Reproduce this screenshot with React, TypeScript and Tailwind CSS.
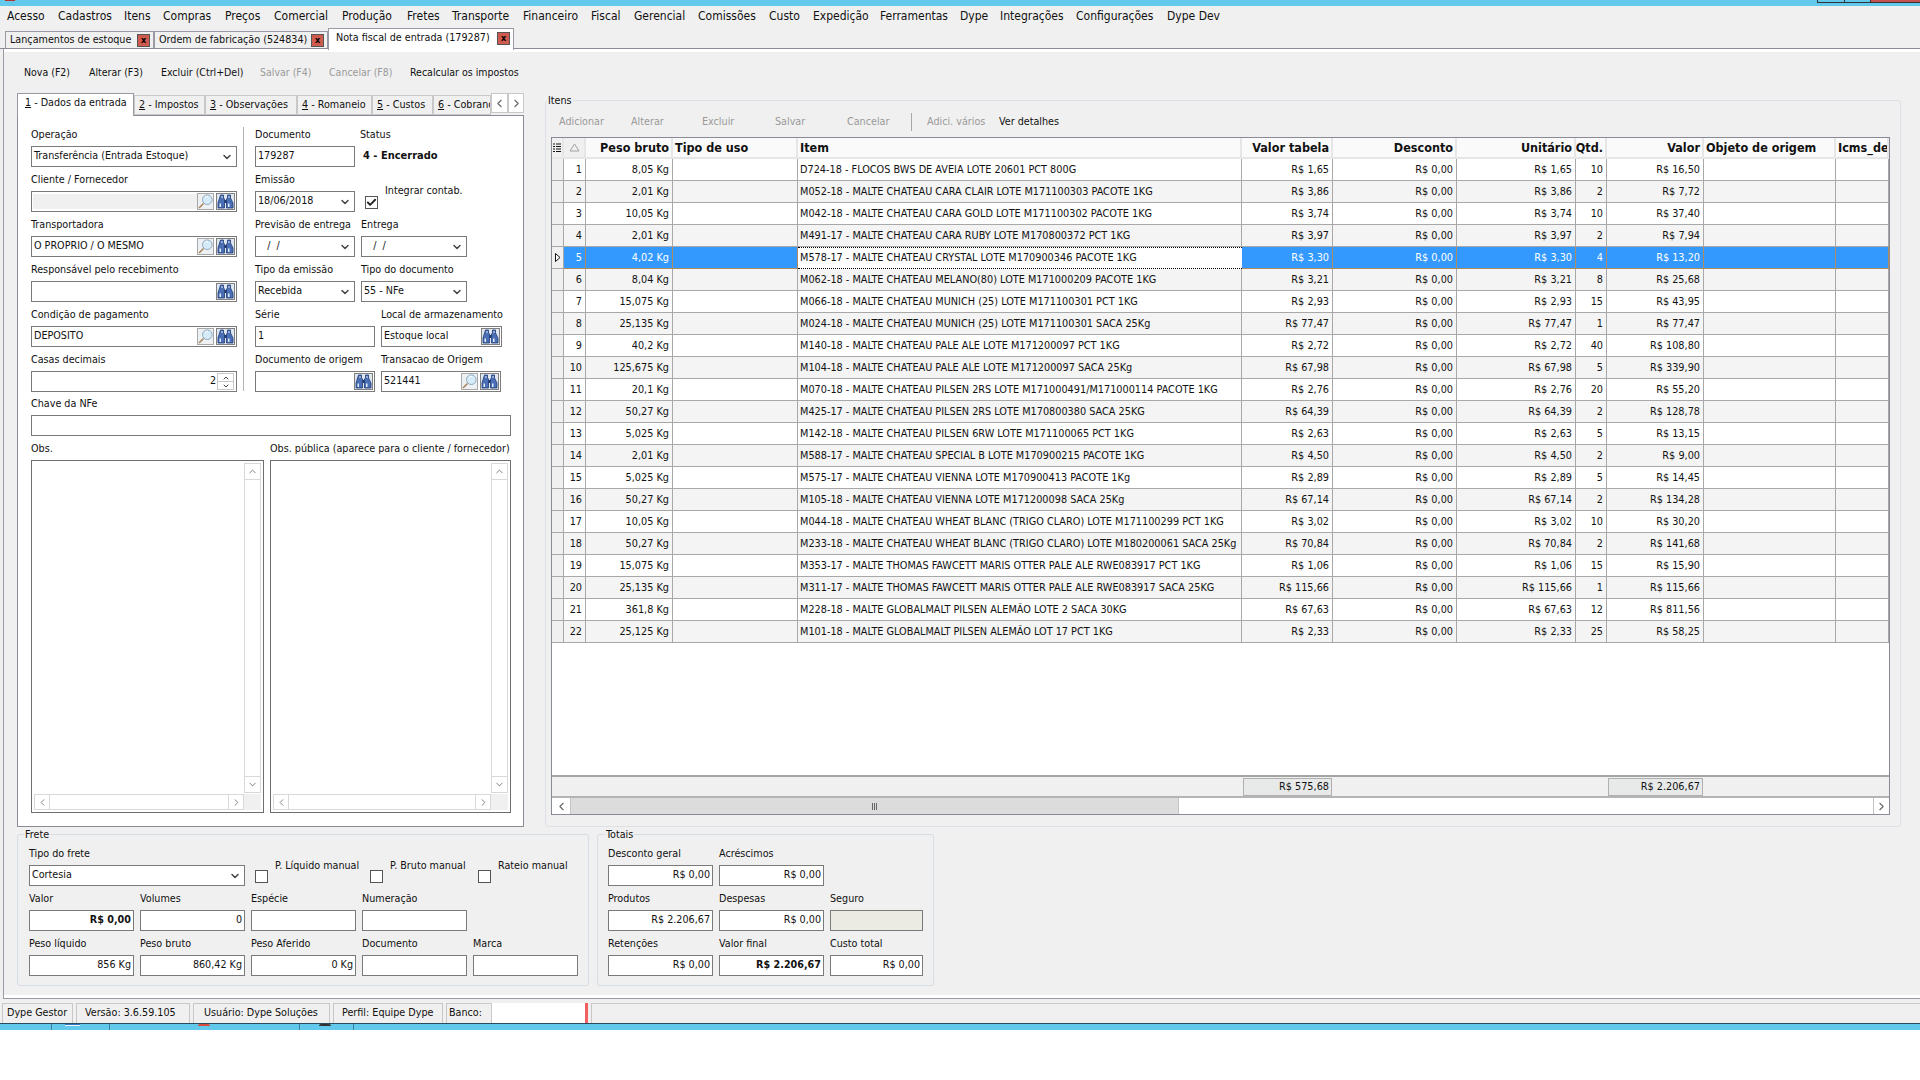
import React from 'react';
import { ChevronDown, ChevronLeft, ChevronRight, ChevronUp, Check } from 'lucide-react';

const menus = [
  ['Acesso', 'w-[51px]'], ['Cadastros', 'w-[66px]'], ['Itens', 'w-[39px]'], ['Compras', 'w-[62px]'],
  ['Preços', 'w-[49px]'], ['Comercial', 'w-[68px]'], ['Produção', 'w-[65px]'], ['Fretes', 'w-[45px]'],
  ['Transporte', 'w-[71px]'], ['Financeiro', 'w-[68px]'], ['Fiscal', 'w-[43px]'], ['Gerencial', 'w-[64px]'],
  ['Comissões', 'w-[71px]'], ['Custo', 'w-[44px]'], ['Expedição', 'w-[67px]'], ['Ferramentas', 'w-[80px]'],
  ['Dype', 'w-[40px]'], ['Integrações', 'w-[76px]'], ['Configurações', 'w-[91px]'], ['Dype Dev', 'w-[70px]'],
];

const rows = [
  ['8,05 Kg', 'D724-18 - FLOCOS BWS DE AVEIA LOTE 20601 PCT 800G', '1,65', '10', '16,50'],
  ['2,01 Kg', 'M052-18 - MALTE CHATEAU CARA CLAIR LOTE M171100303 PACOTE 1KG', '3,86', '2', '7,72'],
  ['10,05 Kg', 'M042-18 - MALTE CHATEAU CARA GOLD LOTE M171100302 PACOTE 1KG', '3,74', '10', '37,40'],
  ['2,01 Kg', 'M491-17 - MALTE CHATEAU CARA RUBY LOTE M170800372 PCT 1KG', '3,97', '2', '7,94'],
  ['4,02 Kg', 'M578-17 - MALTE CHATEAU CRYSTAL LOTE M170900346 PACOTE 1KG', '3,30', '4', '13,20'],
  ['8,04 Kg', 'M062-18 - MALTE CHATEAU MELANO(80) LOTE M171000209 PACOTE 1KG', '3,21', '8', '25,68'],
  ['15,075 Kg', 'M066-18 - MALTE CHATEAU MUNICH (25) LOTE M171100301 PCT 1KG', '2,93', '15', '43,95'],
  ['25,135 Kg', 'M024-18 - MALTE CHATEAU MUNICH (25) LOTE M171100301 SACA 25Kg', '77,47', '1', '77,47'],
  ['40,2 Kg', 'M140-18 - MALTE CHATEAU PALE ALE LOTE M171200097 PCT 1KG', '2,72', '40', '108,80'],
  ['125,675 Kg', 'M104-18 - MALTE CHATEAU PALE ALE LOTE M171200097 SACA 25Kg', '67,98', '5', '339,90'],
  ['20,1 Kg', 'M070-18 - MALTE CHATEAU PILSEN 2RS LOTE M171000491/M171000114 PACOTE 1KG', '2,76', '20', '55,20'],
  ['50,27 Kg', 'M425-17 - MALTE CHATEAU PILSEN 2RS LOTE M170800380 SACA 25KG', '64,39', '2', '128,78'],
  ['5,025 Kg', 'M142-18 - MALTE CHATEAU PILSEN 6RW LOTE M171100065 PCT 1KG', '2,63', '5', '13,15'],
  ['2,01 Kg', 'M588-17 - MALTE CHATEAU SPECIAL B LOTE M170900215 PACOTE 1KG', '4,50', '2', '9,00'],
  ['5,025 Kg', 'M575-17 - MALTE CHATEAU VIENNA LOTE M170900413 PACOTE 1Kg', '2,89', '5', '14,45'],
  ['50,27 Kg', 'M105-18 - MALTE CHATEAU VIENNA LOTE M171200098 SACA 25Kg', '67,14', '2', '134,28'],
  ['10,05 Kg', 'M044-18 - MALTE CHATEAU WHEAT BLANC (TRIGO CLARO) LOTE M171100299 PCT 1KG', '3,02', '10', '30,20'],
  ['50,27 Kg', 'M233-18 - MALTE CHATEAU WHEAT BLANC (TRIGO CLARO) LOTE M180200061 SACA 25Kg', '70,84', '2', '141,68'],
  ['15,075 Kg', 'M353-17 - MALTE THOMAS FAWCETT MARIS OTTER PALE ALE RWE083917 PCT 1KG', '1,06', '15', '15,90'],
  ['25,135 Kg', 'M311-17 - MALTE THOMAS FAWCETT MARIS OTTER PALE ALE RWE083917 SACA 25KG', '115,66', '1', '115,66'],
  ['361,8 Kg', 'M228-18 - MALTE GLOBALMALT PILSEN ALEMÃO LOTE 2 SACA 30KG', '67,63', '12', '811,56'],
  ['25,125 Kg', 'M101-18 - MALTE GLOBALMALT PILSEN ALEMÃO LOT 17 PCT 1KG', '2,33', '25', '58,25'],
];

const headers = [
  ['Peso bruto', 'justify-end'], ['Tipo de uso', 'justify-start'], ['Item', 'justify-start'],
  ['Valor tabela', 'justify-end'], ['Desconto', 'justify-end'], ['Unitário', 'justify-end'],
  ['Qtd.', 'justify-end'], ['Valor', 'justify-end'], ['Objeto de origem', 'justify-start'], ['Icms_de', 'justify-start'],
];

const gridCols = 'grid grid-cols-[12px_22px_87px_125px_444px_91px_124px_119px_31px_97px_132px_53px]';

const Magnifier = () => (
  <span className="w-[17px] h-[17px] bg-[#eef1f4] border border-[#a8a8a8] flex items-center justify-center shrink-0">
    <svg width="15" height="15" viewBox="0 0 15 15">
      <circle cx="9.300" cy="5.700" r="4.800" fill="#d5ebfa" stroke="#8fa9bd" />
      <path d="M7 3.500a3 3 0 0 1 3-1" stroke="#fff" fill="none" />
      <path d="M5.500 9.500 L1 14" stroke="#a8845f" strokeWidth="1.600" />
    </svg>
  </span>
);

const Binoculars = () => (
  <span className="w-[19px] h-[17px] bg-[#dfe7f0] border border-[#7f7f7f] flex items-center justify-center shrink-0">
    <svg width="17" height="15" viewBox="0 0 17 15">
      <path d="M3.500 1h3v3l1 1v9H1V9zM10.500 1h3L13.500 4 16 9v5H9.500V5l1-1z" fill="#4a6fb5" stroke="#1f3a73" strokeWidth=".8" />
      <path d="M7.500 6h2v3h-2z" fill="#1f3a73" />
      <path d="M2.500 9.500h1.500V13H2.500zM11 9.500h1.500V13H11zM4.500 2h1v2h-1zM11.500 2h1v2h-1z" fill="#dfeafa" />
    </svg>
  </span>
);

const Field = ({ label, w, children }: { label: string; w: string; children?: React.ReactNode }) => (
  <div className={`${w} h-[40px] shrink-0 flex flex-col`}>
    <div className="h-[19px] leading-[16px] whitespace-nowrap">{label}</div>
    {children}
  </div>
);

const Input = ({ value, right, bold, children }: { value?: string; right?: boolean; bold?: boolean; children?: React.ReactNode }) => (
  <div className={`h-[21px] border border-[#7a7a7a] bg-white flex items-center ${right ? 'justify-end pr-[2px]' : 'pl-[2px]'} ${bold ? 'font-bold' : ''}`}>
    {value !== undefined && <span className="whitespace-nowrap">{value}</span>}
    {children}
  </div>
);

const Select = ({ value }: { value: string }) => (
  <Input>
    <span className="flex-1 whitespace-pre">{value}</span>
    <ChevronDown size={12} strokeWidth={3} className="text-[#444] mr-[3px]" />
  </Input>
);

const Lookup = ({ value, mag = true, gray }: { value?: string; mag?: boolean; gray?: boolean }) => (
  <Input>
    <span className={`flex-1 flex items-center whitespace-nowrap ${gray ? 'bg-[#f0f0f0] h-[15px] -ml-[1px]' : ''}`}>{value}</span>
    {mag && <Magnifier />}
    <span className="w-[2px]" />
    <Binoculars />
    <span className="w-[1px]" />
  </Input>
);

const ScrollBox = () => (
  <div className="h-full border border-[#6e6e6e] bg-white flex flex-col p-[2px]">
    <div className="flex-1 flex justify-end min-h-0">
      <div className="w-[17px] flex flex-col text-[#777]">
        <div className="h-[17px] border border-[#d8d8d8] flex items-center justify-center"><ChevronUp size={11} /></div>
        <div className="flex-1 border-x border-[#d8d8d8]" />
        <div className="h-[17px] border border-[#d8d8d8] flex items-center justify-center"><ChevronDown size={11} /></div>
      </div>
    </div>
    <div className="h-[16px] flex text-[#777] mt-[1px]">
      <div className="flex-1 flex min-w-0">
        <div className="w-[16px] border border-[#d8d8d8] flex items-center justify-center"><ChevronLeft size={11} /></div>
        <div className="flex-1 border-y border-[#d8d8d8]" />
        <div className="w-[16px] border border-[#d8d8d8] flex items-center justify-center"><ChevronRight size={11} /></div>
      </div>
      <div className="w-[17px] bg-[#f0f0f0]" />
    </div>
  </div>
);

const Check13 = ({ checked }: { checked?: boolean }) => (
  <span className="w-[13px] h-[13px] border border-[#555] bg-white flex items-center justify-center shrink-0">
    {checked && <Check size={11} strokeWidth={4} className="text-[#222]" />}
  </span>
);

const DocTab = ({ label, active, w }: { label: string; active?: boolean; w: string }) => (
  <div className={`${w} flex items-center justify-between shrink-0 border border-[#9a9aa5] border-b-0 pr-[3px] ${active ? 'bg-white h-[22px] pl-[7px] pb-[3px] z-10' : 'bg-[#f0f0f0] h-[17px] mt-[3px] pl-[4px]'}`}>
    <span className="whitespace-nowrap">{label}</span>
    <span className="w-[13px] h-[13px] bg-[#cf5a4e] border border-[#555] flex items-center justify-center text-[9px] leading-none font-bold text-black">x</span>
  </div>
);

const FormTab = ({ n, label, w }: { n: string; label: string; w: string }) => (
  <div className={`${w} h-[20px] mt-[2px] pt-[1px] border border-[#c8c8c8] bg-[#f0f0f0] pl-[4px] flex items-center shrink-0 whitespace-pre overflow-hidden`}>
    <span className="underline">{n}</span> - {label}
  </div>
);

const ListIcon = () => (
  <svg width="8" height="10" viewBox="0 0 8 10">
    <path d="M0 1h2M0 3.500h2M0 6h2M0 8.500h2M3 1h5M3 3.500h5M3 6h5M3 8.500h5" stroke="#111" strokeWidth="1.200" />
  </svg>
);

const Triangle = () => (
  <svg width="11" height="9" viewBox="0 0 11 9">
    <path d="M5.500 1 L10 8 H1 Z" fill="none" stroke="#a0a0a0" />
  </svg>
);

export default function App() {
  return (
    <div className="w-[1920px] h-[1080px] bg-white text-[10.7px] text-[#111] overflow-hidden font-['DejaVu_Sans_Condensed','Liberation_Sans',sans-serif]">
      {/* barra de titulo */}
      <div className="h-[6px] bg-[#63c9ec] flex justify-between">
        <div className="ml-[5px] w-[10px] h-[1px] bg-[#b8322a]" />
        <div className="flex items-start h-[3px]">
          <div className="w-[28px] h-[3px] border-x border-b border-[#333]" />
          <div className="w-[26px] h-[3px] border-r border-b border-[#333]" />
          <div className="w-[49px] h-[3px] bg-[#c75050] border-b border-[#333]" />
        </div>
      </div>

      <div className="h-[1017px] bg-[#f0f0f0] flex flex-col">
        {/* menu */}
        <div className="h-[22px] pl-[7px] pb-[2px] flex items-center shrink-0 text-[12px]">
          {menus.map(([m, w]) => (
            <span key={m} className={`${w} shrink-0 whitespace-nowrap`}>{m}</span>
          ))}
        </div>

        {/* abas de documento */}
        <div className="h-[21px] pl-[5px] flex items-start shrink-0 border-b border-[#8c8c96]">
          <DocTab label="Lançamentos de estoque" w="w-[149px]" />
          <DocTab label="Ordem de fabricação (524834)" w="w-[174px]" />
          <DocTab label="Nota fiscal de entrada (179287)" active w="w-[186px]" />
        </div>

        <div className="flex-1 flex flex-col ml-[3px] border-l border-b border-[#9a9aa5] min-h-0">
          <div className="flex-1 flex flex-col border-y-[3px] border-white pl-[3px] min-h-0">
            {/* barra de ferramentas */}
            <div className="h-[41px] flex items-center pt-[1px] shrink-0 text-[10.5px]">
              <span className="ml-[17px] w-[65px]">Nova (F2)</span>
              <span className="w-[72px]">Alterar (F3)</span>
              <span className="w-[99px]">Excluir (Ctrl+Del)</span>
              <span className="w-[69px] text-[#9a9a9a]">Salvar (F4)</span>
              <span className="w-[81px] text-[#9a9a9a]">Cancelar (F8)</span>
              <span>Recalcular os impostos</span>
            </div>

            <div className="flex h-[734px] shrink-0 ml-[10px] gap-[21px]">
              {/* dados da entrada */}
              <div className="w-[507px] shrink-0 flex flex-col">
                <div className="h-[22px] flex items-start shrink-0">
                  <div className="w-[117px] h-[23px] bg-white border border-[#9a9aa5] border-b-0 pl-[7px] pb-[3px] flex items-center z-10 whitespace-pre">
                    <span className="underline">1</span> - Dados da entrada
                  </div>
                  <FormTab n="2" label="Impostos" w="w-[71px]" />
                  <FormTab n="3" label="Observações" w="w-[92px]" />
                  <FormTab n="4" label="Romaneio" w="w-[75px]" />
                  <FormTab n="5" label="Custos" w="w-[61px]" />
                  <FormTab n="6" label="Cobrança" w="w-[58px]" />
                  <div className="w-[17px] h-[20px] bg-white border border-[#c8c8c8] flex items-center justify-center text-[#666] shrink-0"><ChevronLeft size={13} /></div>
                  <div className="w-[16px] h-[20px] bg-white border border-[#c8c8c8] flex items-center justify-center text-[#666] shrink-0"><ChevronRight size={13} /></div>
                </div>
                <div className="flex-1 bg-white border border-[#8c8c96] pt-[11px] pl-[13px] pr-[12px] flex flex-col min-h-0">
                  <div className="flex h-[264px] shrink-0">
                    <div className="w-[206px] flex flex-col gap-[5px] shrink-0">
                      <Field label="Operação" w="w-full"><Select value="Transferência (Entrada Estoque)" /></Field>
                      <Field label="Cliente / Fornecedor" w="w-full"><Lookup gray /></Field>
                      <Field label="Transportadora" w="w-full"><Lookup value="O PROPRIO / O MESMO" /></Field>
                      <Field label="Responsável pelo recebimento" w="w-full"><Lookup mag={false} /></Field>
                      <Field label="Condição de pagamento" w="w-full"><Lookup value="DEPOSITO" /></Field>
                      <Field label="Casas decimais" w="w-full">
                        <Input right>
                          <span>2</span>
                          <span className="ml-[1px] w-[17px] h-[17px] flex flex-col text-[#444]">
                            <span className="h-[9px] border border-[#c8c8c8] flex items-center justify-center"><ChevronUp size={8} strokeWidth={3} /></span>
                            <span className="h-[8px] border border-[#c8c8c8] border-t-0 flex items-center justify-center"><ChevronDown size={8} strokeWidth={3} /></span>
                          </span>
                        </Input>
                      </Field>
                    </div>
                    <div className="ml-[6px] h-[264px] w-[1px] bg-[#b4b4b4] shrink-0" />
                    <div className="ml-[11px] flex-1 flex flex-col gap-[5px]">
                      <div className="flex gap-[5px]">
                        <Field label="Documento" w="w-[100px]"><Input value="179287" /></Field>
                        <div className="flex flex-col">
                          <div className="h-[19px] leading-[16px]">Status</div>
                          <div className="h-[21px] flex items-center pl-[3px] font-bold text-[11px]">4 - Encerrado</div>
                        </div>
                      </div>
                      <div className="flex h-[40px]">
                        <Field label="Emissão" w="w-[100px]"><Select value="18/06/2018" /></Field>
                        <div className="ml-[10px] mt-[24px]"><Check13 checked /></div>
                        <div className="ml-[7px] mt-[11px] whitespace-nowrap">Integrar contab.</div>
                      </div>
                      <div className="flex gap-[6px]">
                        <Field label="Previsão de entrega" w="w-[100px]"><Select value="   /  /" /></Field>
                        <Field label="Entrega" w="w-[106px]"><Select value="   /  /" /></Field>
                      </div>
                      <div className="flex gap-[6px]">
                        <Field label="Tipo da emissão" w="w-[100px]"><Select value="Recebida" /></Field>
                        <Field label="Tipo do documento" w="w-[106px]"><Select value="55 - NFe" /></Field>
                      </div>
                      <div className="flex gap-[6px]">
                        <Field label="Série" w="w-[120px]"><Input value="1" /></Field>
                        <Field label="Local de armazenamento" w="w-[121px]"><Lookup mag={false} value="Estoque local" /></Field>
                      </div>
                      <div className="flex gap-[6px]">
                        <Field label="Documento de origem" w="w-[120px]"><Lookup mag={false} /></Field>
                        <Field label="Transacao de Origem" w="w-[120px]"><Lookup value="521441" /></Field>
                      </div>
                    </div>
                  </div>
                  <div className="mt-[5px] h-[40px] shrink-0">
                    <Field label="Chave da NFe" w="w-[480px]"><Input /></Field>
                  </div>
                  <div className="mt-[5px] flex gap-[6px] h-[372px] shrink-0">
                    <div className="w-[233px] flex flex-col">
                      <div className="h-[19px] leading-[16px]">Obs.</div>
                      <div className="flex-1 min-h-0"><ScrollBox /></div>
                    </div>
                    <div className="w-[241px] flex flex-col">
                      <div className="h-[19px] leading-[16px] whitespace-nowrap">Obs. pública (aparece para o cliente / fornecedor)</div>
                      <div className="flex-1 min-h-0"><ScrollBox /></div>
                    </div>
                  </div>
                </div>
              </div>

              {/* grupo itens */}
              <div className="w-[1356px] shrink-0 mt-[7px] border border-[#dbe1e6] rounded-[3px] pl-[5px] pt-[10px] relative">
                <span className="absolute -top-[7px] left-[1px] bg-[#f0f0f0] px-[1px] leading-[13px]">Itens</span>
                <div className="h-[22px] mb-[4px] flex items-center pl-[8px] text-[#9a9a9a]">
                  <span className="w-[72px]">Adicionar</span>
                  <span className="w-[71px]">Alterar</span>
                  <span className="w-[73px]">Excluir</span>
                  <span className="w-[72px]">Salvar</span>
                  <span className="w-[64px]">Cancelar</span>
                  <span className="w-[1px] h-[18px] bg-[#a8a8a8] mr-[15px]" />
                  <span className="w-[72px]">Adici. vários</span>
                  <span className="text-[#111]">Ver detalhes</span>
                </div>

                <div className="w-[1339px] h-[678px] border border-[#8a8a94] bg-white flex flex-col overflow-hidden text-[10.8px]">
                  {/* cabecalho */}
                  <div className={`${gridCols} h-[21px] shrink-0 bg-[#fafafa] border-b-2 border-[#e6e6e6] font-bold text-[12.5px]`}>
                    <div className="flex items-center justify-center bg-[#f0f0f0] border-r-2 border-[#e6e6e6]"><ListIcon /></div>
                    <div className="flex items-center justify-center bg-[#f0f0f0] border-r-2 border-[#e6e6e6]"><Triangle /></div>
                    {headers.map(([h, align]) => (
                      <div key={h} className={`flex items-center ${align} px-[2px] pt-[1px] border-r-2 border-[#e6e6e6] whitespace-nowrap overflow-hidden`}>{h}</div>
                    ))}
                  </div>

                  {/* linhas */}
                  {rows.map((r, i) => {
                    const sel = i === 4;
                    const zebra = i % 2 === 1 ? 'bg-[#f4f4f4]' : 'bg-white';
                    const cell = `flex items-center pt-[1px] border-r border-b whitespace-nowrap overflow-hidden ${sel ? 'border-[#b08a60] bg-[#3399ff] text-white' : `border-[#a8a8a8] ${zebra}`}`;
                    return (
                      <div key={r[1]} className={`${gridCols} h-[22px] shrink-0`}>
                        <div className="bg-[#f0f0f0] border-r border-b border-[#a8a8a8] flex items-center justify-center">
                          {sel && <svg width="6" height="9" viewBox="0 0 6 9"><path d="M.5 .5 L5 4.500 L.5 8.500 Z" fill="#fff" stroke="#111" /></svg>}
                        </div>
                        <div className={`${cell} justify-end pr-[3px]`}>{i + 1}</div>
                        <div className={`${cell} justify-end pr-[3px]`}>{r[0]}</div>
                        <div className={cell} />
                        <div className={`flex items-center pl-[2px] pt-[1px] whitespace-nowrap overflow-hidden ${sel ? 'bg-white border-y border-dotted border-black' : `border-r border-b border-[#a8a8a8] ${zebra}`}`}>{r[1]}</div>
                        <div className={`${cell} justify-end pr-[3px]`}>R$ {r[2]}</div>
                        <div className={`${cell} justify-end pr-[3px]`}>R$ 0,00</div>
                        <div className={`${cell} justify-end pr-[3px]`}>R$ {r[2]}</div>
                        <div className={`${cell} justify-end pr-[3px]`}>{r[3]}</div>
                        <div className={`${cell} justify-end pr-[3px]`}>R$ {r[4]}</div>
                        <div className={cell} />
                        <div className={cell} />
                      </div>
                    );
                  })}
                  <div className="flex-1 min-h-0" />

                  {/* rodape */}
                  <div className={`${gridCols} h-[23px] shrink-0 bg-[#f0f0f0] border-y-2 border-[#a4a4a4] border-b-[#b4b4b4]`}>
                    <div className="col-span-5" />
                    <div className="my-[1px] mx-[1px] bg-[#e8eaea] border border-[#b0b0b0] flex items-center justify-end pr-[2px]">R$ 575,68</div>
                    <div className="col-span-3" />
                    <div className="my-[1px] mx-[1px] bg-[#e8eaea] border border-[#b0b0b0] flex items-center justify-end pr-[2px]">R$ 2.206,67</div>
                    <div className="col-span-2" />
                  </div>

                  {/* rolagem */}
                  <div className="h-[16px] shrink-0 flex text-[#666]">
                    <div className="w-[18px] flex items-center justify-center shrink-0"><ChevronLeft size={13} /></div>
                    <div className="w-[609px] bg-[#dcdcdc] border-x border-[#c4c4c4] flex items-center justify-center gap-[1px] shrink-0">
                      <span className="w-[1px] h-[7px] bg-[#666]" />
                      <span className="w-[1px] h-[7px] bg-[#666]" />
                      <span className="w-[1px] h-[7px] bg-[#666]" />
                    </div>
                    <div className="flex-1" />
                    <div className="w-[16px] border-l border-[#c4c4c4] flex items-center justify-center shrink-0"><ChevronRight size={13} /></div>
                  </div>
                </div>
              </div>
            </div>

            {/* frete e totais */}
            <div className="flex mt-[7px] ml-[10px] gap-[8px] items-start">
              <div className="w-[572px] h-[152px] border border-[#d6dde4] rounded-[3px] pl-[11px] pt-[11px] relative shrink-0 flex flex-col gap-[5px]">
                <span className="absolute -top-[7px] left-[6px] bg-[#f0f0f0] px-[1px] leading-[13px]">Frete</span>
                <div className="flex h-[40px]">
                  <Field label="Tipo do frete" w="w-[216px]"><Select value="Cortesia" /></Field>
                  <div className="ml-[10px] mt-[24px]"><Check13 /></div>
                  <div className="ml-[7px] mt-[12px] w-[95px] whitespace-nowrap">P. Líquido manual</div>
                  <div className="mt-[24px]"><Check13 /></div>
                  <div className="ml-[7px] mt-[12px] w-[88px] whitespace-nowrap">P. Bruto manual</div>
                  <div className="mt-[24px]"><Check13 /></div>
                  <div className="ml-[7px] mt-[12px] whitespace-nowrap">Rateio manual</div>
                </div>
                <div className="flex gap-[6px]">
                  <Field label="Valor" w="w-[105px]"><Input value="R$ 0,00" right bold /></Field>
                  <Field label="Volumes" w="w-[105px]"><Input value="0" right /></Field>
                  <Field label="Espécie" w="w-[105px]"><Input /></Field>
                  <Field label="Numeração" w="w-[105px]"><Input /></Field>
                </div>
                <div className="flex gap-[6px]">
                  <Field label="Peso líquido" w="w-[105px]"><Input value="856 Kg" right /></Field>
                  <Field label="Peso bruto" w="w-[105px]"><Input value="860,42 Kg" right /></Field>
                  <Field label="Peso Aferido" w="w-[105px]"><Input value="0 Kg" right /></Field>
                  <Field label="Documento" w="w-[105px]"><Input /></Field>
                  <Field label="Marca" w="w-[105px]"><Input /></Field>
                </div>
              </div>
              <div className="w-[337px] h-[152px] border border-[#d6dde4] rounded-[3px] pl-[10px] pt-[11px] relative shrink-0 flex flex-col gap-[5px]">
                <span className="absolute -top-[7px] left-[7px] bg-[#f0f0f0] px-[1px] leading-[13px]">Totais</span>
                <div className="flex gap-[6px]">
                  <Field label="Desconto geral" w="w-[105px]"><Input value="R$ 0,00" right /></Field>
                  <Field label="Acréscimos" w="w-[105px]"><Input value="R$ 0,00" right /></Field>
                </div>
                <div className="flex gap-[6px]">
                  <Field label="Produtos" w="w-[105px]"><Input value="R$ 2.206,67" right /></Field>
                  <Field label="Despesas" w="w-[105px]"><Input value="R$ 0,00" right /></Field>
                  <Field label="Seguro" w="w-[93px]"><div className="h-[21px] border border-[#7a7a7a] bg-[#ebebe4]" /></Field>
                </div>
                <div className="flex gap-[6px]">
                  <Field label="Retenções" w="w-[105px]"><Input value="R$ 0,00" right /></Field>
                  <Field label="Valor final" w="w-[105px]"><Input value="R$ 2.206,67" right bold /></Field>
                  <Field label="Custo total" w="w-[93px]"><Input value="R$ 0,00" right /></Field>
                </div>
              </div>
            </div>
          </div>
        </div>

        {/* status */}
        <div className="h-[20px] shrink-0 flex items-stretch pl-[2px] gap-[3px] mt-[4px]">
          <div className="w-[71px] border border-[#c8c8c8] border-b-0 pl-[4px] flex items-center whitespace-nowrap">Dype Gestor</div>
          <div className="w-[114px] border border-[#c8c8c8] border-b-0 pl-[8px] flex items-center whitespace-nowrap">Versão: 3.6.59.105</div>
          <div className="w-[137px] border border-[#c8c8c8] border-b-0 pl-[10px] flex items-center whitespace-nowrap">Usuário: Dype Soluções</div>
          <div className="w-[110px] border border-[#c8c8c8] border-b-0 pl-[8px] flex items-center whitespace-nowrap">Perfil: Equipe Dype</div>
          <div className="w-[46px] border border-[#c8c8c8] border-b-0 pl-[2px] flex items-center whitespace-nowrap">Banco:</div>
          <div className="w-[96px] ml-[-3px] bg-white border-r-[3px] border-[#f06060]" />
          <div className="flex-1 border-t border-l border-[#c8c8c8]" />
        </div>
      </div>

      {/* barra de tarefas cortada */}
      <div className="h-[7px] bg-[#63c9ec] border-t border-[#2b4a5c] flex">
        <div className="w-[52px] border-r border-[#3f7f9c]" />
        <div className="w-[58px] border-r border-[#3f7f9c] pl-[13px]"><div className="w-[15px] h-[2px] bg-[#eef6fb] border-t border-[#2f78c4]" /></div>
        <div className="w-[190px] border-r border-[#3f7f9c] pl-[88px]"><div className="w-[12px] h-[2px] bg-[#d94a3a] rounded-t-full" /></div>
        <div className="w-[54px] border-r border-[#3f7f9c] pl-[19px]"><div className="w-[12px] h-[2px] bg-[#333] rounded-t-full" /></div>
      </div>
    </div>
  );
}
